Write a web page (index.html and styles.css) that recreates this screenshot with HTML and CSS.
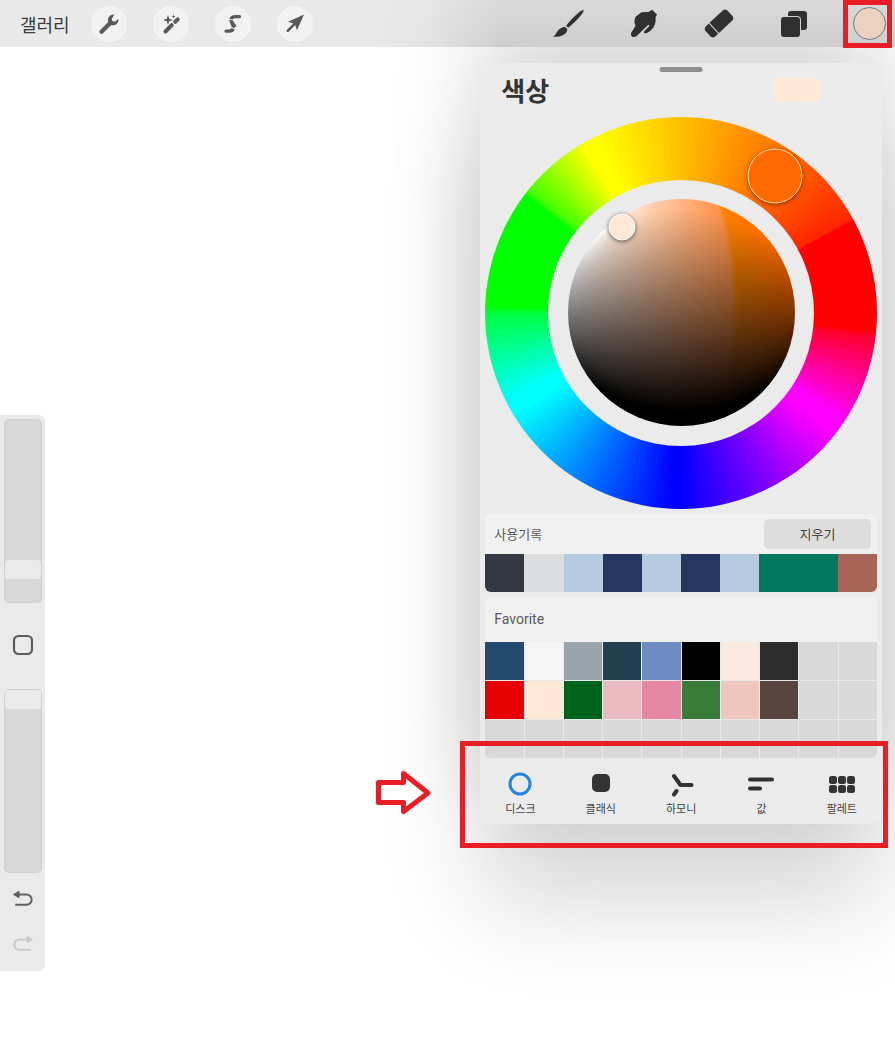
FILE: index.html
```html
<!DOCTYPE html>
<html lang="ko">
<head>
<meta charset="utf-8">
<meta name="viewport" content="width=device-width, initial-scale=1">
<title>색상</title>
<link rel="stylesheet" href="styles.css">
</head>
<body>
<div class="app">
  <header class="toolbar">
    <nav class="tools">
      <a class="gallery" href="#">갤러리</a>
      <div class="tool-group">
        <button class="round" aria-label="동작">
          <svg width="36" height="36" viewBox="0 0 36 36"><path d="M10.500 25.800 19 17.300" stroke="#595959" stroke-width="4.200" stroke-linecap="round"/><path fill="#595959" d="M23.500 8.600 20.800 12.400 21.400 15.200 24.300 15.600 27.300 12.800C27.900 17.300 24.300 20.300 20.200 19.100L17.200 16.100C16 12 19 8.300 23.500 8.600Z"/></svg>
        </button>
        <button class="round" aria-label="조정">
          <svg width="36" height="36" viewBox="0 0 36 36"><path d="M12.500 25.500 18.800 19.200M22.200 15.800 24.700 13.300" stroke="#595959" stroke-width="4" stroke-linecap="round"/><path fill="#595959" d="M15 9 16.200 12.800 20 14 16.200 15.200 15 19 13.800 15.200 10 14 13.800 12.800ZM20.500 8.300 21 10 22.700 10.500 21 11 20.500 12.700 20 11 18.300 10.500 20 10Z"/></svg>
        </button>
        <button class="round" aria-label="선택">
          <svg width="36" height="36" viewBox="0 0 36 36"><path fill="#595959" d="M24.500 9A1.500 1.500 0 0 1 24.500 12.200H21Q18.500 12.200 17.500 13.500L14.300 12.800Q15.500 9 20.500 9ZM14 14 17.600 14.300 21.600 20.300 18.500 22.300 16.500 20.500ZM11 23.500H13.500Q15.500 23.500 16.500 22L19.700 23.400Q18.500 26.600 14.500 26.700H11A1.500 1.500 0 0 1 11 23.500Z"/></svg>
        </button>
        <button class="round" aria-label="변형">
          <svg width="36" height="36" viewBox="0 0 36 36"><path fill="#595959" d="M27 8.500 11.200 15.800 16.300 17.400 9.700 24Q9.200 25.200 9.900 25.800 10.900 26.200 11.600 25.700L18.200 19.100 20 24.300Z"/></svg>
        </button>
      </div>
    </nav>
    <nav class="paint">
      <button class="paint-tool" aria-label="브러시">
        <svg width="40" height="40" viewBox="0 0 40 40"><path fill="#303030" d="M34.500 6.200C35 6.700 34.200 8.300 32.500 10.500 28 16 23.500 20.300 19.200 23.800L17.100 21.800C20.400 17.500 24.500 12.900 29.500 8.800 32 6.800 33.900 5.800 34.500 6.200ZM15.900 22.800 18.300 25C18.300 29 15 33 4 32.800 8.500 30.500 7 24.500 15.900 22.800Z"/></svg>
      </button>
      <button class="paint-tool" aria-label="스머지">
        <svg width="40" height="40" viewBox="0 0 40 40"><path fill="#303030" d="M17.500 8.200 24.500 8 28 5.800 33 10.600 31.500 13.500C32.500 20 29 26.200 22.500 29.200 20 29.700 19 28.300 20.500 26.900L25.500 21.800 24.300 20.800 12.700 32C10.500 34.200 6.400 32.900 7 29.700 7.300 28.200 8.500 27.200 11.600 21.600 10 19.300 10.300 14.500 12 12.500Z"/></svg>
      </button>
      <button class="paint-tool" aria-label="지우개">
        <svg width="40" height="40" viewBox="0 0 40 40"><g transform="translate(20 19.500) rotate(-43)" fill="#303030"><path d="M-6.500 -7H11Q15 -7 15 -3V3Q15 7 11 7H-6.500Z"/><path d="M-7.500 -7V7H-11Q-15 7 -15 3V-3Q-15 -7 -11 -7Z"/></g></svg>
      </button>
      <button class="paint-tool" aria-label="레이어">
        <svg width="40" height="40" viewBox="0 0 40 40"><rect x="14" y="7" width="19" height="19" rx="3" fill="#303030"/><rect x="6" y="12" width="21" height="21" rx="4" fill="#d3d3d3"/><rect x="7" y="13" width="19" height="20" rx="3" fill="#303030"/></svg>
      </button>
      <button class="paint-tool current" aria-label="색상"><span class="current-color"></span><span class="mark mark-color"></span></button>
    </nav>
  </header>

  <main class="stage">
    <aside class="sidebar">
      <input class="slider" type="range" min="0" max="100" value="14" aria-label="브러시 크기">
      <button class="side-button modify" aria-label="수정">
        <svg width="24" height="24" viewBox="0 0 24 24"><rect x="3" y="3" width="18" height="18" rx="4.500" fill="none" stroke="#5c5c5c" stroke-width="2.200"/></svg>
      </button>
      <input class="slider" type="range" min="0" max="100" value="100" aria-label="불투명도">
      <div class="history-buttons">
        <button class="side-button" aria-label="실행 취소">
          <svg width="24" height="24" viewBox="0 0 24 24"><path d="M7 7.500H15.500A4.700 4.700 0 0 1 15.500 17.800H5" fill="none" stroke="#606060" stroke-width="2" stroke-linecap="round"/><path d="M2.500 7.500 8 4.300V10.700Z" fill="#606060" stroke="#606060" stroke-linejoin="round"/></svg>
        </button>
        <button class="side-button" aria-label="다시 실행">
          <svg width="24" height="24" viewBox="0 0 24 24"><path d="M17 7.500H8.500A4.700 4.700 0 0 0 8.500 17.800H19" fill="none" stroke="#c9c9c9" stroke-width="2" stroke-linecap="round"/><path d="M21.500 7.500 16 4.300V10.700Z" fill="#c9c9c9" stroke="#c9c9c9" stroke-linejoin="round"/></svg>
        </button>
      </div>
    </aside>
  </main>

  <section class="popover">
    <svg class="caret" width="32" height="14" viewBox="0 0 32 14"><path d="M0 14Q3 13 5 10L14 1Q15 -1 16 1L31 14Z" fill="#e9e9e9"/></svg>
    <span class="grabber"></span>
    <header class="popover-head">
      <h1>색상</h1>
      <span class="preview"></span>
    </header>

    <div class="wheel">
      <div class="hole"></div>
      <canvas class="disc" width="226" height="226"></canvas>
      <span class="hue-handle"></span>
      <span class="shade-handle"></span>
    </div>

    <section class="card recent">
      <header class="card-head">
        <h2>사용기록</h2>
        <button class="clear">지우기</button>
      </header>
      <div class="swatches solid">
        <span style="--c:#353943"></span><span style="--c:#dcdddf"></span><span style="--c:#b5cade"></span><span style="--c:#273561"></span><span style="--c:#b5cade"></span><span style="--c:#273561"></span><span style="--c:#b5cade"></span><span style="--c:#00775f"></span><span style="--c:#00775f"></span><span style="--c:#a76557"></span>
      </div>
    </section>

    <section class="card favorite">
      <header class="card-head tall">
        <h2>Favorite</h2>
      </header>
      <div class="swatches spaced">
        <span style="--c:#254a6f"></span><span style="--c:#f5f5f5"></span><span style="--c:#99a4ab"></span><span style="--c:#213f4f"></span><span style="--c:#6f8bc4"></span><span style="--c:#000000"></span><span style="--c:#faebe0"></span><span style="--c:#2d2d2d"></span><span></span><span></span>
        <span style="--c:#e60000"></span><span style="--c:#ffe8d5"></span><span style="--c:#00641d"></span><span style="--c:#ebbac1"></span><span style="--c:#e588a4"></span><span style="--c:#397b39"></span><span style="--c:#edc6be"></span><span style="--c:#58463e"></span><span></span><span></span>
        <span></span><span></span><span></span><span></span><span></span><span></span><span></span><span></span><span></span><span></span>
      </div>
    </section>

    <nav class="tabs">
      <button class="tab"><svg width="30" height="26" viewBox="0 0 30 26"><circle cx="15" cy="13" r="10" fill="none" stroke="#1e86e4" stroke-width="3"/></svg>디스크</button>
      <button class="tab"><svg width="30" height="26" viewBox="0 0 30 26"><rect x="6" y="3" width="18" height="18" rx="5" fill="#333"/></svg>클래식</button>
      <button class="tab"><svg width="30" height="26" viewBox="0 0 30 26"><path d="M8 5 14.500 14H25.500M10.500 20 8 23.500" fill="none" stroke="#333" stroke-width="4" stroke-linecap="round" stroke-linejoin="round"/></svg>하모니</button>
      <button class="tab"><svg width="30" height="26" viewBox="0 0 30 26"><path d="M4 8.500H26M4 17.500H14" stroke="#333" stroke-width="4" stroke-linecap="round"/></svg>값</button>
      <button class="tab"><svg width="30" height="26" viewBox="0 0 30 26"><g fill="#333"><rect x="2" y="5" width="8" height="8" rx="2.500"/><rect x="11" y="5" width="8" height="8" rx="2.500"/><rect x="20" y="5" width="8" height="8" rx="2.500"/><rect x="2" y="14" width="8" height="8" rx="2.500"/><rect x="11" y="14" width="8" height="8" rx="2.500"/><rect x="20" y="14" width="8" height="8" rx="2.500"/></g></svg>팔레트</button>
    </nav>

    <span class="mark mark-tabs"></span>
    <svg class="arrow" width="56" height="46" viewBox="0 0 56 46"><path d="M2.500 12.500H27.500V3.500L52 23 27.500 41.500V32.500H2.500Z" fill="#fff" stroke="#ea1c24" stroke-width="5" stroke-linejoin="round"/></svg>
  </section>
</div>
<script src="disc.js"></script>
</body>
</html>
```
FILE: disc.js
```js
// Paints the saturation/brightness square mapped onto a disc.
const canvas = document.querySelector('.disc');
const ctx = canvas.getContext('2d');
const size = canvas.width;
const image = ctx.createImageData(size, size);
const root = (n) => Math.sqrt(Math.max(0, n));
const mix = (a, b, t) => a + (b - a) * t;
const clamp = (n) => Math.min(1, Math.max(0, n));
const EDGE = 0.72;

for (let py = 0; py < size; py++) {
  for (let px = 0; px < size; px++) {
    let u = ((px + 0.5) / size) * 2 - 1;
    let v = 1 - ((py + 0.5) / size) * 2;
    const length = Math.hypot(u, v);
    if (length > 1) { u /= length; v /= length; }
    const k = 2 * Math.SQRT2;
    const x = (root(2 + u * u - v * v + k * u) - root(2 + u * u - v * v - k * u)) / 2;
    const y = (root(2 - u * u + v * v + k * v) - root(2 - u * u + v * v - k * v)) / 2;
    const saturation = clamp((x + 1) / 2);
    const value = clamp(((y + 1) / 2 - 0.06) / 0.9);
    const t = saturation / EDGE;
    const s = clamp((saturation - EDGE) / (1 - EDGE));
    // Past the edge the colour turns fully saturated, less so in the shadows.
    const jump = clamp((saturation - EDGE) / 0.03) * clamp(value * 1.6);
    const green = mix(mix(255, 148, t), mix(134, 104, s), jump);
    const blue = mix(mix(255, 76, t), 0, jump);
    const i = (py * size + px) * 4;
    image.data[i] = 255 * value;
    image.data[i + 1] = green * value;
    image.data[i + 2] = blue * value;
    image.data[i + 3] = 255;
  }
}
ctx.putImageData(image, 0, 0);
```
FILE: styles.css
```css
* {
  box-sizing: border-box;
}

body {
  margin: 0;
  background: #fff;
  color: #333;
  font-family: "Noto Sans CJK KR", "Noto Sans", sans-serif;
}

button {
  margin: 0;
  padding: 0;
  border: 0;
  background: none;
  color: inherit;
  font: inherit;
}

svg,
canvas {
  display: block;
}

h1,
h2 {
  margin: 0;
}

.app {
  position: relative;
  display: flex;
  flex-direction: column;
  min-height: 100vh;
  overflow: hidden;
}

.toolbar {
  position: relative;
  z-index: 3;
  display: flex;
  align-items: center;
  justify-content: space-between;
  height: 47px;
  padding: 0 6px 0 20px;
  background:
    linear-gradient(to right, #e9e9e9 42%, rgba(233, 233, 233, 0.75) 48%, rgba(233, 233, 233, 0) 56%),
    linear-gradient(#dadada, #cecece);
}

.tools,
.tool-group,
.paint {
  display: flex;
  align-items: center;
}

.tools {
  gap: 21px;
}

.tool-group {
  gap: 26px;
}

.paint {
  gap: 35px;
}

.gallery {
  color: #3a3a3a;
  font-size: 18px;
  line-height: 26px;
  text-decoration: none;
}

.round {
  width: 36px;
  height: 36px;
  border-radius: 50%;
  background: #f2f2f2;
}

.paint-tool {
  width: 40px;
  height: 40px;
}

.current {
  position: relative;
  display: grid;
  place-items: center;
}

.current-color {
  width: 33px;
  height: 33px;
  border: 1px solid #777;
  border-radius: 50%;
  background: #ebd1c0;
}

.mark {
  position: absolute;
  border: 5px solid #ea1c24;
  pointer-events: none;
}

.mark-color {
  inset: -4px -3px -4px -6px;
}

.stage {
  display: flex;
  flex: 1;
  align-items: flex-start;
}

.sidebar {
  display: flex;
  flex-direction: column;
  align-items: center;
  width: 45px;
  margin-top: 368px;
  padding: 4px 4px 15px;
  border-radius: 0 6px 6px 0;
  background: #eaeaea;
}

.slider {
  width: 38px;
  height: 184px;
  margin: 0;
  border: 1px solid #d0d0d0;
  border-radius: 5px;
  background: #d8d8d8;
  appearance: none;
  direction: rtl;
  writing-mode: vertical-lr;
}

.slider::-webkit-slider-thumb {
  width: 36px;
  height: 19px;
  border-radius: 4px;
  background: #eaeaea;
  appearance: none;
}

.side-button {
  display: grid;
  place-items: center;
  width: 36px;
  height: 24px;
}

.modify {
  margin: 30px 0 32px;
}

.history-buttons {
  display: grid;
  gap: 21px;
  margin-top: 14px;
}

.popover {
  position: absolute;
  z-index: 2;
  top: 63px;
  right: 13px;
  width: clamp(320px, calc(45% - 1px), 480px);
  border-radius: 12px;
  background: #ebebeb;
  box-shadow: 0 80px 100px rgba(0, 0, 0, 0.16), 0 -50px 90px rgba(0, 0, 0, 0.15);
}

.caret {
  position: absolute;
  top: -13px;
  right: 5px;
}

.grabber {
  position: absolute;
  top: 4px;
  left: 50%;
  width: 43px;
  height: 5px;
  border-radius: 3px;
  background: #8e8e8e;
  transform: translateX(-50%);
}

.popover-head {
  display: flex;
  align-items: center;
  justify-content: space-between;
  height: 54px;
  padding: 0 62px 0 21px;
}

.popover-head h1 {
  font-size: 26px;
  font-weight: 700;
  line-height: 36px;
}

.preview {
  width: 46px;
  height: 24px;
  border-radius: 4px;
  background: #ffe8d5;
}

.wheel {
  position: relative;
  display: grid;
  place-items: center;
  margin: 0 5px;
  aspect-ratio: 1;
  border-radius: 50%;
  background: conic-gradient(#ffbf00 0deg, #ff9800 16deg, #ff6a00 35deg, #ff2600 61deg, #f00 62deg, #f00 95deg, #ff0030 97deg, #ff00e0 120deg, #f0f 123deg, #f0f 128deg, #8000ff 153deg, #00f 180deg, #00f 183deg, #0080ff 212deg, #0ff 239deg, #0ff 243deg, #00ff40 270deg, #0f0 272deg, #0f0 307deg, #48ff00 309deg, #ff0 330deg, #ff0 334deg, #ffbf00 360deg);
}

.hole,
.disc {
  grid-area: 1 / 1;
  border-radius: 50%;
}

.hole {
  width: 68%;
  height: 68%;
  background: #ebebeb;
}

.disc {
  width: 58%;
  height: 58%;
}

.hue-handle,
.shade-handle {
  position: absolute;
  border-radius: 50%;
  transform: translate(-50%, -50%);
}

.hue-handle {
  top: 15%;
  left: 74%;
  width: 55px;
  height: 55px;
  border: 1px solid #ffd9a8;
  background: #ff6a00;
  box-shadow: 0 1px 4px rgba(0, 0, 0, 0.5);
}

.shade-handle {
  top: 28%;
  left: 35%;
  width: 27px;
  height: 27px;
  border: 1px solid #fff;
  background: #ffe8d5;
  box-shadow: 0 1px 4px rgba(0, 0, 0, 0.6);
}

.card {
  margin: 5px 5px 0;
  overflow: hidden;
  border-radius: 6px;
  background: #f1f1f1;
}

.card-head {
  display: flex;
  align-items: center;
  justify-content: space-between;
  height: 40px;
  padding: 0 6px 0 9px;
}

.tall {
  height: 45px;
}

.card h2 {
  color: #5a5a5a;
  font-size: 13px;
  font-weight: 400;
  line-height: 20px;
}

.favorite h2 {
  font-family: Roboto, sans-serif;
  font-size: 14px;
}

.clear {
  width: 107px;
  height: 30px;
  border-radius: 5px;
  background: #dddddd;
  color: #444;
  font-size: 13px;
}

.swatches {
  display: grid;
  grid-template-columns: repeat(10, 1fr);
}

.swatches span {
  height: 38px;
  background: var(--c, #d9d9d9);
}

.spaced {
  gap: 1px;
  background: #e9e9e9;
}

.tabs {
  display: grid;
  grid-template-columns: repeat(5, 1fr);
  height: 66px;
  padding-top: 13px;
}

.tab {
  display: flex;
  flex-direction: column;
  align-items: center;
  gap: 3px;
  color: #444;
  font-size: 11px;
  line-height: 16px;
}

.mark-tabs {
  right: -6px;
  bottom: -24px;
  left: -20px;
  height: 107px;
}

.arrow {
  position: absolute;
  bottom: 8px;
  left: -104px;
}
```
